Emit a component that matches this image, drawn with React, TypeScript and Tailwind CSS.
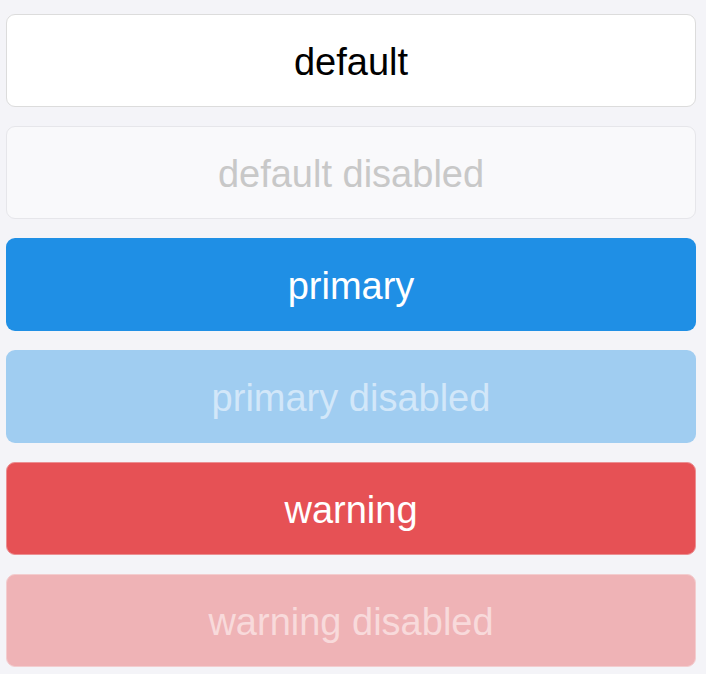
import React from "react";

const base =
  "flex h-[93px] w-full items-center justify-center rounded-[9px] pt-[3px] text-[38px] leading-none";

export default function App() {
  return (
    <div
      className="min-h-[674px] w-[706px] bg-[#f4f4f8] pl-[6px] pr-[10px] pt-[14px]"
      style={{ fontFamily: '"Liberation Sans", Arial, sans-serif' }}
    >
      <div className="flex flex-col gap-[19px]">
        <button className={`${base} border border-[#dcdcdc] bg-white text-black`}>default</button>
        <button className={`${base} border border-[#e6e6ea] bg-[#f9f9fb] text-[#c8c8c8]`}>default disabled</button>
        <button className={`${base} bg-[#1f8fe5] text-white`}>primary</button>
        <button className={`${base} bg-[#a0cdf1] text-[#d2e7f9]`}>primary disabled</button>
        <button className={`${base} border border-[#eb8f92] bg-[#e65155] text-white`}>warning</button>
        <button className={`${base} border border-[#f3cdcf] bg-[#efb3b6] text-[#f8dadb]`}>warning disabled</button>
      </div>
    </div>
  );
}
